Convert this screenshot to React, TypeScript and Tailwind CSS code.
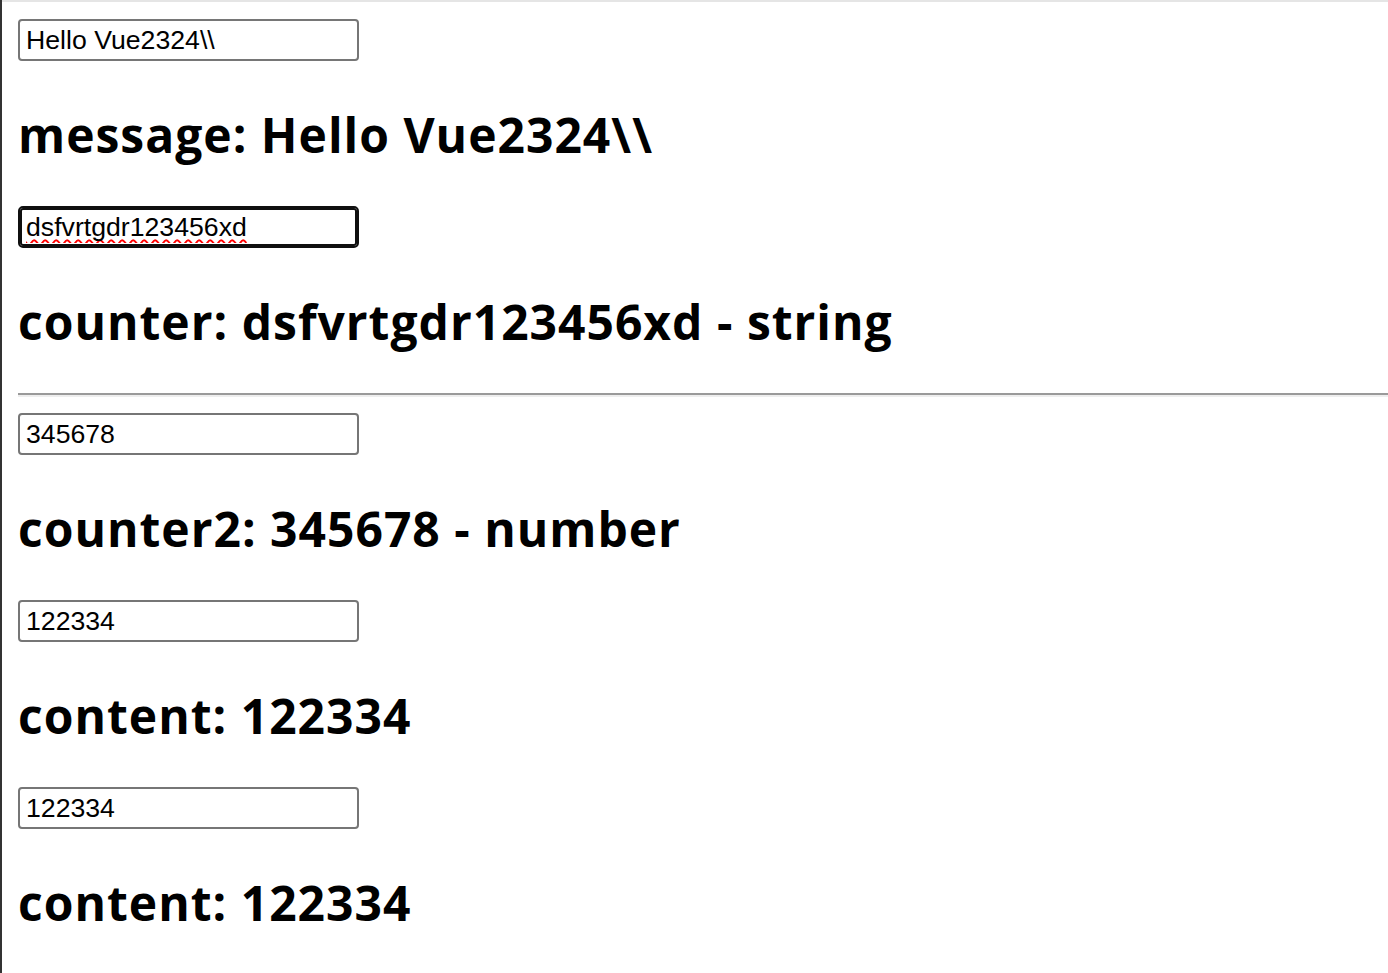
import { useState } from 'react'

const inputCls =
  "block w-[341px] h-[42px] px-[6px] py-[2px] border-2 border-[#767676] rounded-[4px] bg-white text-black text-[26.67px] font-['Liberation_Sans',Arial,sans-serif] outline-none"

const focusedCls =
  "block w-[341px] h-[42px] px-[6px] py-[2px] border-2 border-[#101010] rounded-[5px] shadow-[inset_0_0_0_2px_#101010] bg-white text-black text-[26.67px] font-['Liberation_Sans',Arial,sans-serif] outline-none underline decoration-wavy decoration-[#ff0000] decoration-[1.5px] underline-offset-[3px] [text-decoration-skip-ink:none]"

const headCls =
  "my-[40px] h-[65px] leading-[67px] text-[48px] font-bold text-black font-['Open_Sans','Noto_Sans',sans-serif] tracking-[1px]"

export default function App() {
  const [message, setMessage] = useState('Hello Vue2324\\\\')
  const [counter, setCounter] = useState('dsfvrtgdr123456xd')
  const [counter2, setCounter2] = useState('345678')
  const [content, setContent] = useState('122334')

  return (
    <div className="min-h-screen w-full bg-white border-l-2 border-l-[#333333]">
      <div className="h-[2px] bg-[#e5e5e5]" />
      <div className="px-[16px] pt-[17px] pb-[16px]">
        <input className={inputCls} value={message} onChange={(e) => setMessage(e.target.value)} />
        <h2 className={headCls}>message: {message}</h2>

        <input
          className={focusedCls}
          value={counter}
          spellCheck={false}
          onChange={(e) => setCounter(e.target.value)}
        />
        <h2 className={headCls}>counter: {counter} - {typeof counter}</h2>

        <hr className="-mr-[16px] mt-[40px] mb-[16px] border-t-2 border-b-2 border-t-[#9a9a9a] border-b-[#eeeeee]" />

        <input className={inputCls} value={counter2} onChange={(e) => setCounter2(e.target.value)} />
        <h2 className={headCls}>counter2: {counter2} - number</h2>

        <input className={inputCls} value={content} onChange={(e) => setContent(e.target.value)} />
        <h2 className={headCls}>content: {content}</h2>

        <input className={inputCls} value={content} onChange={(e) => setContent(e.target.value)} />
        <h2 className={headCls}>content: {content}</h2>
      </div>
    </div>
  )
}
